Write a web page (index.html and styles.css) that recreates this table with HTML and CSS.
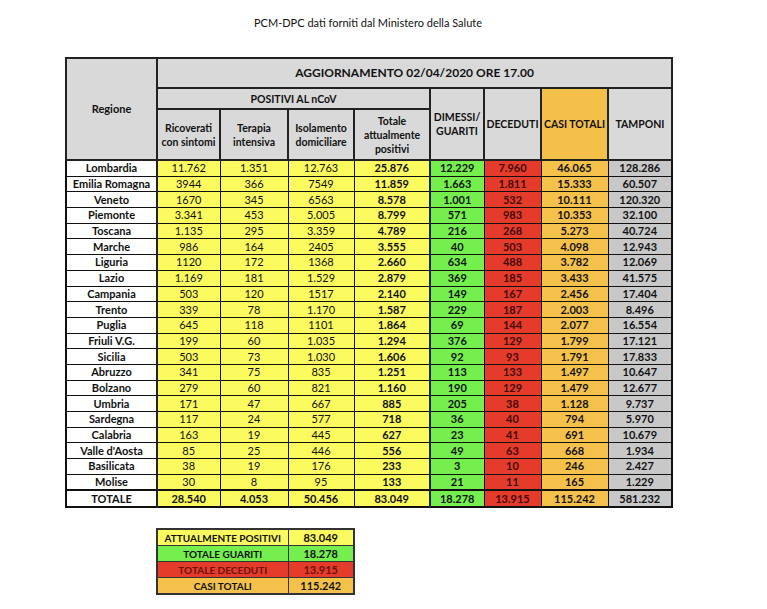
FILE: index.html
```html
<!DOCTYPE html>
<html lang="it">
<head>
<meta charset="utf-8">
<title>PCM-DPC dati</title>
<link rel="stylesheet" href="styles.css">
</head>
<body>
<div class="page">
  <div class="title">PCM-DPC dati forniti dal Ministero della Salute</div>
  <table class="main">
    <colgroup>
      <col style="width:91px"><col style="width:63px"><col style="width:68px"><col style="width:66px"><col style="width:76px"><col style="width:54px"><col style="width:57px"><col style="width:67px"><col style="width:64px">
    </colgroup>
    <thead>
      <tr class="h1">
        <th rowspan="3" class="hgray reghead">Regione</th>
        <th colspan="8" class="hgray big">AGGIORNAMENTO 02/04/2020 ORE 17.00</th>
      </tr>
      <tr class="h2">
        <th colspan="4" class="hgray">POSITIVI AL nCoV</th>
        <th rowspan="2" class="hgray">DIMESSI/<br>GUARITI</th>
        <th rowspan="2" class="hgray">DECEDUTI</th>
        <th rowspan="2" class="horange">CASI TOTALI</th>
        <th rowspan="2" class="hgray">TAMPONI</th>
      </tr>
      <tr class="h3">
        <th class="hgray">Ricoverati<br>con sintomi</th>
        <th class="hgray">Terapia<br>intensiva</th>
        <th class="hgray">Isolamento<br>domiciliare</th>
        <th class="hgray">Totale<br>attualmente<br>positivi</th>
      </tr>
    </thead>
    <tbody>
      <tr><td class="reg">Lombardia</td><td class="y">11.762</td><td class="y">1.351</td><td class="y">12.763</td><td class="y b">25.876</td><td class="g">12.229</td><td class="r">7.960</td><td class="o">46.065</td><td class="s">128.286</td></tr>
      <tr><td class="reg">Emilia Romagna</td><td class="y">3944</td><td class="y">366</td><td class="y">7549</td><td class="y b">11.859</td><td class="g">1.663</td><td class="r">1.811</td><td class="o">15.333</td><td class="s">60.507</td></tr>
      <tr><td class="reg">Veneto</td><td class="y">1670</td><td class="y">345</td><td class="y">6563</td><td class="y b">8.578</td><td class="g">1.001</td><td class="r">532</td><td class="o">10.111</td><td class="s">120.320</td></tr>
      <tr><td class="reg">Piemonte</td><td class="y">3.341</td><td class="y">453</td><td class="y">5.005</td><td class="y b">8.799</td><td class="g">571</td><td class="r">983</td><td class="o">10.353</td><td class="s">32.100</td></tr>
      <tr><td class="reg">Toscana</td><td class="y">1.135</td><td class="y">295</td><td class="y">3.359</td><td class="y b">4.789</td><td class="g">216</td><td class="r">268</td><td class="o">5.273</td><td class="s">40.724</td></tr>
      <tr><td class="reg">Marche</td><td class="y">986</td><td class="y">164</td><td class="y">2405</td><td class="y b">3.555</td><td class="g">40</td><td class="r">503</td><td class="o">4.098</td><td class="s">12.943</td></tr>
      <tr><td class="reg">Liguria</td><td class="y">1120</td><td class="y">172</td><td class="y">1368</td><td class="y b">2.660</td><td class="g">634</td><td class="r">488</td><td class="o">3.782</td><td class="s">12.069</td></tr>
      <tr><td class="reg">Lazio</td><td class="y">1.169</td><td class="y">181</td><td class="y">1.529</td><td class="y b">2.879</td><td class="g">369</td><td class="r">185</td><td class="o">3.433</td><td class="s">41.575</td></tr>
      <tr><td class="reg">Campania</td><td class="y">503</td><td class="y">120</td><td class="y">1517</td><td class="y b">2.140</td><td class="g">149</td><td class="r">167</td><td class="o">2.456</td><td class="s">17.404</td></tr>
      <tr><td class="reg">Trento</td><td class="y">339</td><td class="y">78</td><td class="y">1.170</td><td class="y b">1.587</td><td class="g">229</td><td class="r">187</td><td class="o">2.003</td><td class="s">8.496</td></tr>
      <tr><td class="reg">Puglia</td><td class="y">645</td><td class="y">118</td><td class="y">1101</td><td class="y b">1.864</td><td class="g">69</td><td class="r">144</td><td class="o">2.077</td><td class="s">16.554</td></tr>
      <tr><td class="reg">Friuli V.G.</td><td class="y">199</td><td class="y">60</td><td class="y">1.035</td><td class="y b">1.294</td><td class="g">376</td><td class="r">129</td><td class="o">1.799</td><td class="s">17.121</td></tr>
      <tr><td class="reg">Sicilia</td><td class="y">503</td><td class="y">73</td><td class="y">1.030</td><td class="y b">1.606</td><td class="g">92</td><td class="r">93</td><td class="o">1.791</td><td class="s">17.833</td></tr>
      <tr><td class="reg">Abruzzo</td><td class="y">341</td><td class="y">75</td><td class="y">835</td><td class="y b">1.251</td><td class="g">113</td><td class="r">133</td><td class="o">1.497</td><td class="s">10.647</td></tr>
      <tr><td class="reg">Bolzano</td><td class="y">279</td><td class="y">60</td><td class="y">821</td><td class="y b">1.160</td><td class="g">190</td><td class="r">129</td><td class="o">1.479</td><td class="s">12.677</td></tr>
      <tr><td class="reg">Umbria</td><td class="y">171</td><td class="y">47</td><td class="y">667</td><td class="y b">885</td><td class="g">205</td><td class="r">38</td><td class="o">1.128</td><td class="s">9.737</td></tr>
      <tr><td class="reg">Sardegna</td><td class="y">117</td><td class="y">24</td><td class="y">577</td><td class="y b">718</td><td class="g">36</td><td class="r">40</td><td class="o">794</td><td class="s">5.970</td></tr>
      <tr><td class="reg">Calabria</td><td class="y">163</td><td class="y">19</td><td class="y">445</td><td class="y b">627</td><td class="g">23</td><td class="r">41</td><td class="o">691</td><td class="s">10.679</td></tr>
      <tr><td class="reg">Valle d'Aosta</td><td class="y">85</td><td class="y">25</td><td class="y">446</td><td class="y b">556</td><td class="g">49</td><td class="r">63</td><td class="o">668</td><td class="s">1.934</td></tr>
      <tr><td class="reg">Basilicata</td><td class="y">38</td><td class="y">19</td><td class="y">176</td><td class="y b">233</td><td class="g">3</td><td class="r">10</td><td class="o">246</td><td class="s">2.427</td></tr>
      <tr><td class="reg">Molise</td><td class="y">30</td><td class="y">8</td><td class="y">95</td><td class="y b">133</td><td class="g">21</td><td class="r">11</td><td class="o">165</td><td class="s">1.229</td></tr>
      <tr class="tot"><td class="reg">TOTALE</td><td class="y">28.540</td><td class="y">4.053</td><td class="y">50.456</td><td class="y">83.049</td><td class="g">18.278</td><td class="r">13.915</td><td class="o">115.242</td><td class="s">581.232</td></tr>
    </tbody>
  </table>
  <table class="sum">
    <colgroup><col style="width:131px"><col style="width:66px"></colgroup>
    <tr><td class="y lab">ATTUALMENTE POSITIVI</td><td class="y">83.049</td></tr>
    <tr><td class="g lab">TOTALE GUARITI</td><td class="g">18.278</td></tr>
    <tr><td class="r lab">TOTALE DECEDUTI</td><td class="r">13.915</td></tr>
    <tr><td class="o lab">CASI TOTALI</td><td class="o">115.242</td></tr>
  </table>
</div>
</body>
</html>
```

FILE: styles.css
```css
html, body {
  margin: 0;
  padding: 0;
  background: #ffffff;
}
body {
  font-family: Lato, "Open Sans", "Liberation Sans", sans-serif;
  color: #111;
}
.page {
  width: 606px;
  padding-left: 65px;
  padding-top: 15px;
}
.title {
  text-align: center;
  font-size: 11px;
  font-weight: 400;
  height: 42px;
  line-height: 16px;
}
table {
  border-collapse: collapse;
  table-layout: fixed;
}
.main {
  width: 606px;
  border: 2px solid #111;
}
.main th {
  font-size: 10.5px;
  font-weight: 700;
  line-height: 14px;
  border: 2px solid #222;
  padding: 0;
  text-align: center;
  vertical-align: middle;
}
.main th.reghead {
  font-size: 11px;
}
.main th.big {
  font-size: 12px;
}
.h1 th.big { height: 28px; }
.h2 th { height: 19px; }
.h3 th { height: 49px; }
.hgray { background: #d9d9d9; }
.horange { background: #f5c04a; }
.main td {
  font-size: 11px;
  font-weight: 700;
  height: 14.7px;
  line-height: 12px;
  padding: 0;
  text-align: center;
  border: 1px solid #111;
}
.main td.y { font-weight: 400; }
.main td.b, .main .tot td { font-weight: 700; }
.main tbody tr:first-child td { border-top: 2px solid #222; }
.main .tot td { border-top: 2px solid #111; height: 15px; }
.main td.reg { background: #fff; border-right: 2px solid #222; }
.main td.g { border-left: 2px solid #222; }
.y { background: #fbfa5f; }
.g { background: #74ef4d; }
.r { background: #e53b2b; color: #420a07; }
.o { background: #f5c14b; }
.s { background: #c8c8c8; }

.sum {
  margin-left: 91px;
  margin-top: 20px;
  width: 197px;
  border: 2px solid #333;
}
.sum td {
  font-size: 11px;
  font-weight: 700;
  height: 15px;
  line-height: 12px;
  padding: 0;
  text-align: center;
  border: 1px solid #333;
}
.sum td.lab { font-size: 10px; }
.sum td.r { color: #6a120c; }
```
